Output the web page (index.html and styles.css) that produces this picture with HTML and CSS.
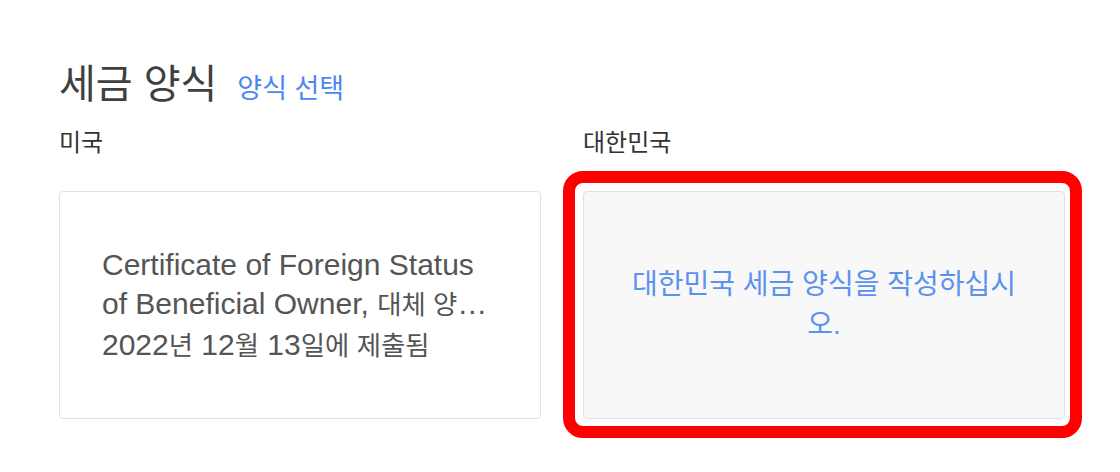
FILE: index.html
```html
<!DOCTYPE HTML>
<html lang="ko">
<head>
<meta http-equiv="Content-Type" content="text/html; charset=utf-8" />
<title>세금 양식</title>
<link rel="stylesheet" href="styles.css">
</head>
<body>
	<div class="taxForms">
		<div class="taxHead">
			<h2>세금 양식</h2>
			<a href="#" class="pick">양식 선택</a>
		</div>

		<div class="taxGrid">
			<div class="taxCol">
				<p class="country">미국</p>
				<div class="formCard">
					<div class="formInfo">
						<p class="formName">Certificate of Foreign Status of Beneficial Owner, <span class="ko">대체 양식 W-8BEN</span></p>
						<p class="formDate">2022<span class="ko">년</span> 12<span class="ko">월</span> 13<span class="ko">일에 제출됨</span></p>
					</div>
				</div>
			</div>
			<div class="taxCol">
				<p class="country">대한민국</p>
				<div class="formCard empty focus">
					<a href="#" class="fillLink">대한민국 세금 양식을 작성하십시오.</a>
				</div>
			</div>
		</div>
	</div>
</body>
</html>
```

FILE: styles.css
```css
* {
	margin: 0;
	padding: 0;
}

body {
	font-family: "Liberation Sans", "Noto Sans CJK KR", sans-serif;
	color: #333;
	background: #fff;
}

a {
	text-decoration: none;
}

/**** 세금 양식 *****/
.taxForms {
	width: 1006px;
	padding: 61px 0 53px 59px;
}

.taxHead {
	display: flex;
	align-items: baseline;
	gap: 20px;
}

.taxHead h2 {
	font-size: 40px;
	line-height: 46px;
	font-weight: normal;
	color: #404040;
}

.taxHead .pick {
	font-size: 27px;
	color: #4a88ef;
}

.taxGrid {
	display: grid;
	grid-template-columns: 482px 482px;
	column-gap: 42px;
	margin-top: 21px;
}

.country {
	font-size: 24px;
	line-height: 30px;
	color: #333;
	margin-bottom: 33px;
}

.formCard {
	position: relative;
	display: flex;
	align-items: center;
	height: 228px;
	padding: 0 42px;
	box-sizing: border-box;
	border: 1px solid #e2e2e2;
	border-radius: 4px;
	background: #fff;
}

.formInfo {
	font-size: 30px;
	line-height: 39px;
	color: #555;
}

.formInfo .ko {
	font-size: 0.88em;
}

.formName {
	display: -webkit-box;
	-webkit-box-orient: vertical;
	-webkit-line-clamp: 2;
	overflow: hidden;
}

.formCard.empty {
	justify-content: center;
	text-align: center;
	background: #f8f8f8;
}

.fillLink {
	font-size: 28px;
	line-height: 40px;
	color: #5b92ef;
}

/* 강조 테두리 */
.formCard.focus::after {
	content: "";
	position: absolute;
	top: -21px;
	left: -21px;
	right: -18px;
	bottom: -20px;
	border: 12px solid #ff0000;
	border-radius: 20px;
}
```
